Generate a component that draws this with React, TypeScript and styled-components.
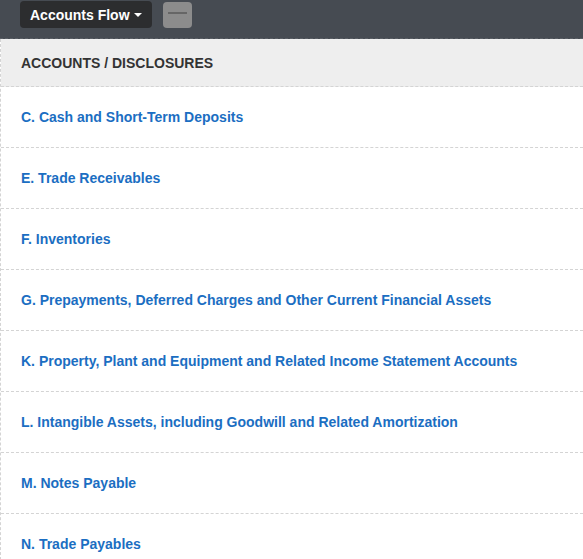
import styled, { createGlobalStyle } from "styled-components";

const GlobalStyle = createGlobalStyle`
  body {
    margin: 0;
    background: #ffffff;
    font-family: "Liberation Sans", Arial, sans-serif;
  }
`;

const TopBar = styled.div`
  display: flex;
  align-items: flex-start;
  gap: 11px;
  height: 39px;
  padding: 1px 0 0 20px;
  box-sizing: border-box;
  background: #464b52;
  border-bottom: 1px dashed #5a5f66;
`;

const FlowButton = styled.button`
  display: flex;
  align-items: center;
  gap: 4px;
  height: 27px;
  padding: 0 10px;
  border: 0;
  border-radius: 4px;
  background: #2c2d2f;
  color: #ffffff;
  font-family: "Liberation Sans", Arial, sans-serif;
  font-weight: 700;
  font-size: 14px;
  cursor: pointer;
`;

const Caret = styled.span`
  display: inline-block;
  width: 0;
  height: 0;
  border-left: 4px solid transparent;
  border-right: 4px solid transparent;
  border-top: 4px solid #ffffff;
  margin-top: 1px;
`;

const CollapseButton = styled.button`
  position: relative;
  width: 29px;
  height: 26px;
  margin-top: 1px;
  padding: 0;
  border: 0;
  border-radius: 4px;
  background: #8c8c8c;
  cursor: pointer;
  &::after {
    content: "";
    position: absolute;
    left: 5px;
    right: 5px;
    top: 10px;
    height: 2px;
    background: #666666;
  }
`;

const Panel = styled.div`
  border-left: 1px dashed #d4d4d4;
`;

const Header = styled.div`
  display: flex;
  align-items: center;
  height: 48px;
  padding-left: 20px;
  box-sizing: border-box;
  background: #eeeeee;
  border-bottom: 1px dashed #d4d4d4;
  color: #333333;
  font-weight: 700;
  font-size: 14px;
`;

const Row = styled.a`
  display: flex;
  align-items: center;
  height: 61px;
  padding-left: 20px;
  box-sizing: border-box;
  border-bottom: 1px dashed #d4d4d4;
  color: #1b6ec2;
  font-weight: 700;
  font-size: 14px;
  text-decoration: none;
  cursor: pointer;
`;

const accounts = [
  "C. Cash and Short-Term Deposits",
  "E. Trade Receivables",
  "F. Inventories",
  "G. Prepayments, Deferred Charges and Other Current Financial Assets",
  "K. Property, Plant and Equipment and Related Income Statement Accounts",
  "L. Intangible Assets, including Goodwill and Related Amortization",
  "M. Notes Payable",
  "N. Trade Payables",
];

export default function App() {
  return (
    <>
      <GlobalStyle />
      <TopBar>
        <FlowButton>
          Accounts Flow <Caret />
        </FlowButton>
        <CollapseButton aria-label="collapse" />
      </TopBar>
      <Panel>
        <Header>ACCOUNTS / DISCLOSURES</Header>
        {accounts.map((name) => (
          <Row key={name}>{name}</Row>
        ))}
      </Panel>
    </>
  );
}
